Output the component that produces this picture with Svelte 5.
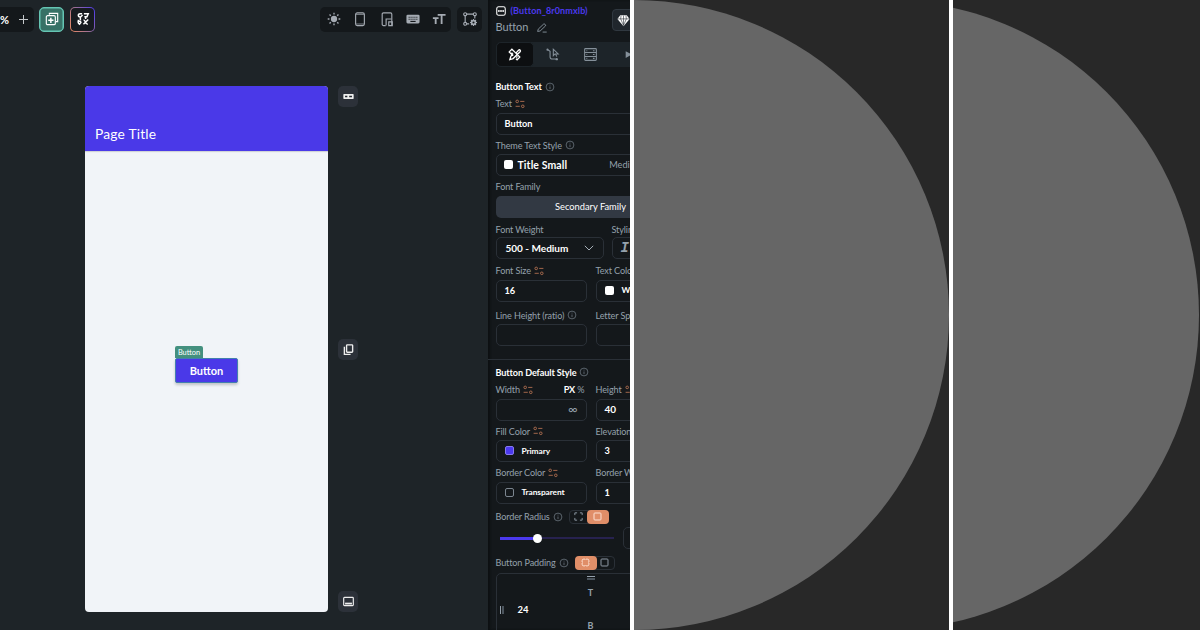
<script>
    let pageTitle = 'Page Title';
    let fontSize = '16';
    let padding = '24';
    let radius = 33;

    const devices = ['sun', 'mobile', 'resize', 'keyboard', 'text'];
    const tabs = ['design', 'actions', 'backend', 'play'];
</script>

{#snippet info()}
    <svg class="info" viewBox="0 0 10 10">
        <circle cx="5" cy="5" r="3.9" />
        <path d="M5 4.5v2.6M5 2.7v.8" />
    </svg>
{/snippet}

{#snippet variable()}
    <svg class="variable" viewBox="0 0 10 10">
        <circle cx="2.2" cy="2.4" r="1.3" />
        <circle cx="7.8" cy="7.3" r="1.3" />
        <path d="M5.2 2.4h4.2M.6 7.3h4.2" />
    </svg>
{/snippet}

{#snippet icon(name)}
    <svg class="icon icon-{name}" viewBox="0 0 16 16">
        {#if name === 'add'}
            <path d="M5 3.2V1.5h9.5V11h-2" />
            <rect x="1.5" y="4.2" width="10.3" height="10.3" rx="1.5" />
            <path d="M6.7 6.5v6M3.7 9.5h6" stroke-width="1.7" />
        {:else if name === 'flow'}
            <path d="M4 2h3M9 2h5l-1.5 3.5H9.5M4 2Q2 3 3 5l2 1M7.5 3.5 5 6v3M2 10.5h4M3 9q-1.5 3 1 5l2-2.5M8.5 9q1.5 0 2.2 2.5T13.5 14M14 8.5 8.5 14M11 6v2" stroke-width="1.7" />
        {:else if name === 'sun'}
            <circle cx="8" cy="8" r="3.6" class="solid" />
            <path d="M8 .8v2M8 13.2v2M.8 8h2M13.2 8h2M2.9 2.9l1.4 1.4M11.7 11.7l1.4 1.4M2.9 13.1l1.4-1.4M11.7 4.3l1.4-1.4" stroke-width="1.5" />
        {:else if name === 'mobile'}
            <rect x="3" y="1" width="10" height="14.5" rx="1.8" />
            <path d="M3.5 2.8h9M3.5 13.7h9" stroke-width=".8" />
        {:else if name === 'resize'}
            <path d="M6.5 15.5H4A1.5 1.5 0 0 1 2.5 14V2.5A1.5 1.5 0 0 1 4 1h8a1.5 1.5 0 0 1 1.5 1.5V15" />
            <path d="M7 15.5V8h6M10 15.5v-4.2h4v4.2z" />
        {:else if name === 'keyboard'}
            <rect x=".5" y="3" width="15" height="10" rx="1.5" class="solid" />
            <path d="M3 6h10M3 8.2h10" stroke="#14181b" stroke-dasharray="1.2 1" stroke-width="1.2" />
            <path d="M5 10.8h6" stroke="#14181b" />
        {:else if name === 'text'}
            <path d="M6.5 3.2h9M11 3.2v10.5M1 7h6.5M4.2 7v6.7" stroke-width="2.1" />
        {:else if name === 'nodes'}
            <path d="M2.5 4.5v7M4.5 2.5h7M13.5 4.5v3M4.5 13.5h2.5" />
            <circle cx="2.5" cy="2.5" r="1.7" /><circle cx="13.5" cy="2.5" r="1.7" /><circle cx="2.5" cy="13.5" r="1.7" />
            <circle cx="12" cy="12" r="2.2" stroke-width="2" />
            <path d="M12 8v1.5M12 14.5V16M8 12h1.5M14.5 12H16M9.2 9.2l1 1M13.8 13.8l1 1M14.8 9.2l-1 1M9.2 14.8l1-1" stroke-width="1.4" />
        {:else if name === 'design'}
            <path d="M6.3 9.7 1.5 4.8l3.3-3.3 4.9 4.8M9.7 6.3l3.2-3.6q1.2-1 2.1 0t-.1 2L6.3 13l-4 1.2 1.2-4L6.3 7M9.8 13.2l1.4 1.3 3.3-3.3-4.8-4.9M4 7.2l1.5-1.4M10.2 11.8l1.5-1.5" stroke-width="1.6" />
        {:else if name === 'actions'}
            <path d="M2.2 2.2 5 4v7q0 2.5 3 2.5h4M9 1.5v8l2-2.2h4zM11.7 7.4l1.6 3.2" />
            <circle cx="1.8" cy="2" r="1.3" class="solid" /><circle cx="13.2" cy="13.7" r="1.5" class="solid" />
        {:else if name === 'backend'}
            <rect x=".8" y=".8" width="14.4" height="14.4" rx="1" />
            <path d="M1 5.6h14M1 10.4h14M11 3.3h2M11 8h2M11 12.8h2M3 3.3h1M3 8h1M3 12.8h1" />
        {:else if name === 'play'}
            <path d="M3 2v12l11-6z" class="solid" />
        {:else if name === 'gem'}
            <path d="M4 1.5h8L15.5 6 8 15 .5 6z" class="solid" />
            <path d="M.8 6h14.4M5 2 4.5 6 8 14l3.5-8L11 2M8 2v12" stroke="#20262c" stroke-width=".7" />
        {:else if name === 'pencil'}
            <path d="m1 13.5 1-3.7 8.5-8q1.2-.8 2.5.5t.5 2.5l-8.5 8zM9 14.5h6.5" />
        {:else if name === 'widget'}
            <rect x="1.2" y="1.2" width="13.6" height="13.6" rx="3" stroke-width="1.7" />
            <path d="M3.5 8h9" stroke-width="3" stroke-dasharray="2.2 1.2" />
        {:else if name === 'appbar'}
            <rect x=".5" y="4.5" width="15" height="7" rx=".8" class="solid" />
            <path d="M3 8h3.3M9 8h4" stroke="#22272e" stroke-width="2.4" />
        {:else if name === 'copy'}
            <rect x="5.2" y="1.2" width="8.8" height="10.8" rx="1" stroke-width="2" />
            <path d="M2 4v11h9" stroke-width="2" />
        {:else if name === 'navbar'}
            <rect x="1" y="2" width="14" height="12" rx="1.2" stroke-width="1.7" />
            <path d="M3 11h10" stroke-width="2.6" />
        {:else if name === 'corners'}
            <path d="M1.5 5.5v-4h4M10.5 1.5h4v4M14.5 10.5v4h-4M5.5 14.5h-4v-4" stroke-width="1.6" />
        {:else if name === 'square'}
            <rect x="1.8" y="1.8" width="12.4" height="12.4" rx="1.5" stroke-width="1.7" />
        {:else if name === 'round'}
            <rect x="2" y="2" width="12" height="12" rx="2.8" stroke-width="1.7" />
            <path d="M8 0v2M8 14v2M0 8h2M14 8h2" stroke="#e08e68" stroke-width="2" />
        {/if}
    </svg>
{/snippet}

<div class="page">
    <div class="builder">
        <main class="canvas">
            <header class="toolbar">
                <div class="zoom"><b>%</b><span class="plus"></span></div>
                <button class="tool teal">{@render icon('add')}</button>
                <button class="tool gradient">{@render icon('flow')}</button>
                <div class="devices">
                    {#each devices as name}
                        {@render icon(name)}
                    {/each}
                </div>
                <button class="tool dark">{@render icon('nodes')}</button>
            </header>
            <div class="stage">
                <div class="phone">
                    <div class="app-bar">{pageTitle}</div>
                    <div class="app-body">
                        <div class="selected">
                            <span class="tag">Button</span>
                            <div class="app-button">Button</div>
                        </div>
                    </div>
                </div>
                <div class="side">
                    {#each ['appbar', 'copy', 'navbar'] as name}
                        <button>{@render icon(name)}</button>
                    {/each}
                </div>
            </div>
        </main>

        <aside class="inspector">
            <div class="head">
                <div>
                    <div class="widget-id">{@render icon('widget')}<span>(Button_8r0nmxlb)</span></div>
                    <div class="widget-name"><span>Button</span>{@render icon('pencil')}</div>
                </div>
                <div class="gem-box">{@render icon('gem')}</div>
            </div>
            <nav class="tabs">
                {#each tabs as name, i}
                    <button class:active={i === 0}>{@render icon(name)}</button>
                {/each}
            </nav>

            <h3><span>Button Text</span>{@render info()}</h3>
            <div class="field">
                <label><span>Text</span>{@render variable()}</label>
                <div class="input"><b>Button</b></div>
            </div>
            <div class="field">
                <label><span>Theme Text Style</span>{@render info()}</label>
                <div class="input style-input"><i class="swatch"></i><b class="large">Title Small</b><em>Medium</em></div>
            </div>
            <div class="field">
                <label><span>Font Family</span></label>
                <div class="input filled">Secondary Family</div>
            </div>
            <div class="row weight">
                <div class="field">
                    <label><span>Font Weight</span></label>
                    <div class="input select"><b class="medium">500 - Medium</b><svg viewBox="0 0 10 6"><path d="m.8.8 4.2 4.2L9.2.8" /></svg></div>
                </div>
                <div class="field">
                    <label><span>Styling</span></label>
                    <div class="input italic">I</div>
                </div>
            </div>
            <div class="row size">
                <div class="field">
                    <label><span>Font Size</span>{@render variable()}</label>
                    <div class="input"><b>{fontSize}</b></div>
                </div>
                <div class="field">
                    <label><span>Text Color</span></label>
                    <div class="input color"><i class="swatch"></i><b class="thin">White</b></div>
                </div>
            </div>
            <div class="row line">
                <div class="field">
                    <label><span>Line Height (ratio)</span>{@render info()}</label>
                    <div class="input"></div>
                </div>
                <div class="field">
                    <label><span>Letter Spacing</span></label>
                    <div class="input"></div>
                </div>
            </div>

            <hr />
            <h3 class="second"><span>Button Default Style</span>{@render info()}</h3>
            <div class="row">
                <div class="field">
                    <label><span>Width</span>{@render variable()}<span class="unit"><b>PX</b> %</span></label>
                    <div class="input infinite">∞</div>
                </div>
                <div class="field">
                    <label><span>Height</span>{@render variable()}</label>
                    <div class="input"><b class="number">40</b></div>
                </div>
            </div>
            <div class="row">
                <div class="field">
                    <label><span>Fill Color</span>{@render variable()}</label>
                    <div class="input color"><i class="swatch primary"></i><b class="thin">Primary</b></div>
                </div>
                <div class="field">
                    <label><span>Elevation</span></label>
                    <div class="input"><b>3</b></div>
                </div>
            </div>
            <div class="row">
                <div class="field">
                    <label><span>Border Color</span>{@render variable()}</label>
                    <div class="input color"><i class="swatch none"></i><b class="thin">Transparent</b></div>
                </div>
                <div class="field">
                    <label><span>Border Width</span></label>
                    <div class="input"><b>1</b></div>
                </div>
            </div>
            <div class="option">
                <span>Border Radius</span>{@render info()}
                <div class="toggle"><i>{@render icon('corners')}</i><i class="on">{@render icon('square')}</i></div>
            </div>
            <div class="slider-row">
                <div class="slider">
                    <div class="track" style="width: {radius}%"></div>
                    <div class="thumb"></div>
                </div>
                <div class="input"></div>
            </div>
            <div class="option padding">
                <span>Button Padding</span>{@render info()}
                <div class="toggle"><i class="on">{@render icon('round')}</i><i>{@render icon('square')}</i></div>
            </div>
            <div class="padding-box">
                <div class="left"><span class="bars"></span><b>{padding}</b></div>
                <div class="middle"><span class="lines"></span><span>T</span><span class="bottom">B</span></div>
            </div>
        </aside>
    </div>
    <div class="preview"><div class="disc"></div></div>
    <div class="preview cut"><div class="disc"></div></div>
</div>

<style>
    :global(body) {
        margin: 0;
        background: #fff;
    }
    .page {
        display: flex;
        gap: 4px;
        width: 1200px;
        height: 630px;
        overflow: hidden;
        background: #fff;
        font-family: Lato, "Liberation Sans", sans-serif;
        color: #fff;
    }
    .page * {
        box-sizing: border-box;
    }
    button {
        border: 0;
        padding: 0;
        display: flex;
        align-items: center;
        justify-content: center;
    }
    svg {
        display: block;
        flex: none;
        fill: none;
        stroke: currentColor;
        overflow: visible;
    }
    .icon {
        width: 14px;
        height: 14px;
        stroke-width: 1.3;
    }
    .solid {
        fill: currentColor;
        stroke: none;
    }
    .builder {
        display: flex;
        flex: none;
        width: 630px;
        overflow: hidden;
    }
    .canvas {
        flex: none;
        width: 487.5px;
        background: #1e2428;
    }
    .toolbar {
        display: flex;
        height: 38px;
        align-items: center;
    }
    .zoom {
        display: flex;
        align-items: center;
        width: 34px;
        height: 25px;
        margin-right: 5px;
        border-radius: 0 5px 5px 0;
        background: #14181b;
        font-size: 11px;
    }
    .zoom b {
        width: 19px;
    }
    .plus {
        width: 9px;
        height: 9px;
        background: linear-gradient(#c5c8cb, #c5c8cb) center / 9px 1px no-repeat, linear-gradient(#c5c8cb, #c5c8cb) center / 1px 9px no-repeat;
    }
    .tool {
        flex: none;
        width: 25px;
        height: 25px;
        border-radius: 5px;
        color: #fff;
    }
    .teal {
        margin-right: 6px;
        border: 1px solid #65c5b3;
        box-shadow: inset 0 0 0 0.5px #65c5b3;
        background: #377166;
    }
    .gradient {
        border: 1.5px solid transparent;
        background: linear-gradient(#171b20, #171b20) padding-box, linear-gradient(60deg, #ee8b60, #9a6e98 50%, #4b39ef) border-box;
    }
    .devices {
        display: flex;
        align-items: center;
        justify-content: space-between;
        width: 131px;
        height: 25px;
        margin: 0 6px 0 225px;
        padding: 0 5px 0 7px;
        border-radius: 5px;
        background: #14181b;
        color: #a5abb3;
    }
    .dark {
        background: #14181b;
        color: #a5abb3;
    }
    .stage {
        display: flex;
        gap: 10px;
        height: 526px;
        margin: 48px 0 0 85px;
    }
    .phone {
        display: flex;
        flex-direction: column;
        width: 243px;
        overflow: hidden;
        border-radius: 4px;
        background: #f1f4f8;
    }
    .app-bar {
        height: 65px;
        padding: 39px 10px 0;
        background: #4a39e8;
        font-size: 13.8px;
        line-height: 17px;
        letter-spacing: 0.2px;
        box-shadow: 0 1px 1px #0002;
    }
    .app-body {
        display: flex;
        flex: 1;
        justify-content: center;
        padding-top: 195px;
    }
    .selected {
        width: 63px;
    }
    .tag {
        display: block;
        width: 28px;
        height: 12px;
        border-radius: 2px 2px 0 0;
        background: #44907f;
        font-size: 7.4px;
        line-height: 13px;
        text-align: center;
    }
    .app-button {
        height: 25px;
        border: 1px solid #437fae;
        border-radius: 2px;
        background: #4a39e8;
        box-shadow: 0 2px 3px #0003;
        font-size: 11px;
        font-weight: 700;
        line-height: 23px;
        text-align: center;
    }
    .side {
        display: flex;
        flex-direction: column;
        justify-content: space-between;
    }
    .side button {
        width: 20px;
        height: 21px;
        border-radius: 5px;
        background: #2c3139;
        color: #eee;
    }
    .side .icon {
        width: 11px;
        height: 11px;
    }
    .inspector {
        flex: none;
        width: 222px;
        padding: 0 8px;
        background: #14181b;
        box-shadow: inset 2px 0 2px #0d1012;
        color: #95a1ac;
    }
    .head {
        display: flex;
        height: 42px;
        padding-top: 4.5px;
    }
    .head > div:first-child {
        width: 116px;
    }
    .widget-id {
        display: flex;
        align-items: center;
        gap: 5px;
        height: 12px;
        color: #fff;
        white-space: nowrap;
    }
    .widget-id span {
        margin-top: -1px;
        color: #4b39ef;
        font-size: 9px;
        font-weight: 700;
        letter-spacing: 0.12px;
    }
    .widget-id .icon {
        width: 10px;
        height: 10px;
    }
    .widget-name {
        display: flex;
        align-items: center;
        gap: 9px;
        height: 21px;
        font-size: 11px;
    }
    .widget-name span {
        margin-top: -1px;
        letter-spacing: -0.1px;
    }
    .widget-name .icon {
        width: 10px;
        height: 10px;
        margin-top: 2px;
    }
    .gem-box {
        width: 32px;
        height: 22px;
        margin-top: 4px;
        padding: 4px;
        border: 1px solid #303840;
        border-radius: 4px;
        background: #20262c;
        color: #fff;
    }
    .gem-box .icon {
        width: 13px;
        height: 13px;
    }
    .tabs {
        display: flex;
        width: 190px;
        height: 25px;
        border-radius: 5px;
        background: #1d2429;
    }
    .tabs button {
        width: 38px;
        height: 25px;
        background: none;
        color: #85909a;
    }
    .tabs .active {
        border: 1px solid #1d2429;
        border-radius: 5px;
        background: #0d0f11;
        color: #fff;
    }
    .tabs .icon {
        width: 13px;
        height: 13px;
    }
    .tabs .icon-play {
        width: 9px;
        height: 9px;
    }
    h3 {
        display: flex;
        align-items: center;
        gap: 3px;
        height: 16px;
        margin: 11.5px 0 0;
        color: #fff;
        font-size: 9.1px;
        letter-spacing: -0.1px;
    }
    .info {
        width: 10px;
        height: 10px;
        color: #77828c;
        stroke-width: 0.7;
    }
    .variable {
        width: 10px;
        height: 10px;
        color: #b16f50;
        stroke-width: 0.9;
    }
    .field {
        margin-bottom: 1.5px;
    }
    label {
        display: flex;
        align-items: center;
        gap: 3px;
        height: 18px;
        font-size: 9.1px;
        letter-spacing: -0.12px;
        white-space: nowrap;
    }
    .input {
        display: flex;
        align-items: center;
        height: 22px;
        padding: 0 8px 1px;
        border: 1px solid #2a3037;
        border-radius: 5px;
        color: #fff;
        font-size: 9.2px;
        white-space: nowrap;
    }
    .style-input {
        width: 170px;
        padding: 0 7px 1px;
    }
    .style-input .large {
        margin: 0 auto 0 5px;
        font-size: 10.5px;
        letter-spacing: 0.1px;
    }
    .style-input em {
        margin-right: 15px;
        color: #95a1ac;
        font-style: normal;
    }
    .swatch {
        width: 9px;
        height: 9px;
        border-radius: 2px;
        background: #fff;
    }
    .primary {
        border: 1px solid #8679ef;
        background: #4b39ef;
    }
    .none {
        border: 1px solid #7b858f;
        background: none;
    }
    .filled {
        width: 190px;
        justify-content: center;
        border: 0;
        background: #323943;
        font-size: 9.3px;
    }
    .row {
        display: grid;
        grid-template-columns: 91px 91px;
        gap: 9px;
    }
    .weight {
        grid-template-columns: 108px 70px;
        gap: 8px;
        margin-top: 1px;
    }
    .weight label {
        padding-top: 2px;
    }
    .select {
        justify-content: space-between;
        padding: 0 9px 1px;
    }
    .select svg {
        width: 10px;
        height: 6px;
        color: #a5afb8;
    }
    .medium {
        font-size: 10px;
    }
    .italic {
        font: italic bold 14px "Liberation Mono", monospace;
        color: #95a1ac;
    }
    .number {
        font-size: 10px;
    }
    .color b {
        margin-left: 8px;
    }
    .thin {
        font-size: 8.4px;
        letter-spacing: -0.1px;
    }
    .size {
        margin-top: 1px;
    }
    .line {
        margin-top: 3px;
    }
    hr {
        height: 1px;
        margin: 11px -8px 0;
        border: 0;
        background: #2a3037;
    }
    .second {
        height: 17px;
        margin-top: 4px;
    }
    .unit {
        margin-left: auto;
        margin-right: 2px;
    }
    .unit b {
        color: #fff;
    }
    .infinite {
        justify-content: flex-end;
        color: #95a1ac;
        font-size: 13px;
    }
    .option {
        display: flex;
        align-items: center;
        gap: 3px;
        height: 15px;
        margin-top: 4px;
        font-size: 9.1px;
        letter-spacing: -0.13px;
        white-space: nowrap;
    }
    .toggle {
        display: flex;
        height: 14px;
        margin-left: 3px;
        border: 1px solid #2a3037;
        border-radius: 4px;
    }
    .toggle i {
        display: flex;
        align-items: center;
        justify-content: center;
        width: 18px;
    }
    .toggle .on {
        width: 22px;
        margin: -1px;
        border-radius: 4px;
        background: #e08e68;
        color: #ffe6d8;
    }
    .toggle .icon {
        width: 9px;
        height: 9px;
    }
    .slider-row {
        display: flex;
        align-items: center;
        gap: 9px;
        height: 22px;
        margin-top: 3px;
        padding-left: 4px;
    }
    .slider {
        display: flex;
        align-items: center;
        flex: none;
        width: 114px;
        height: 2px;
        background: #27224f;
    }
    .track {
        height: 3px;
        background: #4b39ef;
    }
    .thumb {
        width: 9px;
        height: 9px;
        margin-left: -4px;
        border-radius: 50%;
        background: #fff;
    }
    .slider-row .input {
        width: 50px;
    }
    .padding {
        margin-top: 6px;
    }
    .padding-box {
        display: flex;
        height: 80px;
        margin-top: 3px;
        border: 1px solid #2a3037;
        border-radius: 5px;
        font-size: 9px;
    }
    .left {
        display: flex;
        align-items: center;
        width: 84px;
        height: 71px;
        color: #fff;
        font-size: 9.5px;
    }
    .bars {
        width: 4px;
        height: 8px;
        margin: 0 14px 0 3px;
        border-left: 1px solid #95a1ac;
        border-right: 2px solid #4a535c;
    }
    .middle {
        display: flex;
        flex-direction: column;
        align-items: center;
        width: 20px;
        padding-top: 2px;
        font-weight: 700;
        line-height: 11px;
    }
    .lines {
        width: 8px;
        height: 4px;
        margin-bottom: 7px;
        border-top: 1px solid #95a1ac;
        border-bottom: 2px solid #4a535c;
    }
    .bottom {
        margin-top: 22px;
    }
    .preview {
        flex: none;
        width: 315px;
        overflow: hidden;
        background: #282828;
    }
    .disc {
        width: 630px;
        height: 630px;
        margin-left: -315px;
        border-radius: 50%;
        background: #666;
    }
    .cut {
        width: 247px;
    }
    .cut .disc {
        margin-left: -384px;
    }
</style>
